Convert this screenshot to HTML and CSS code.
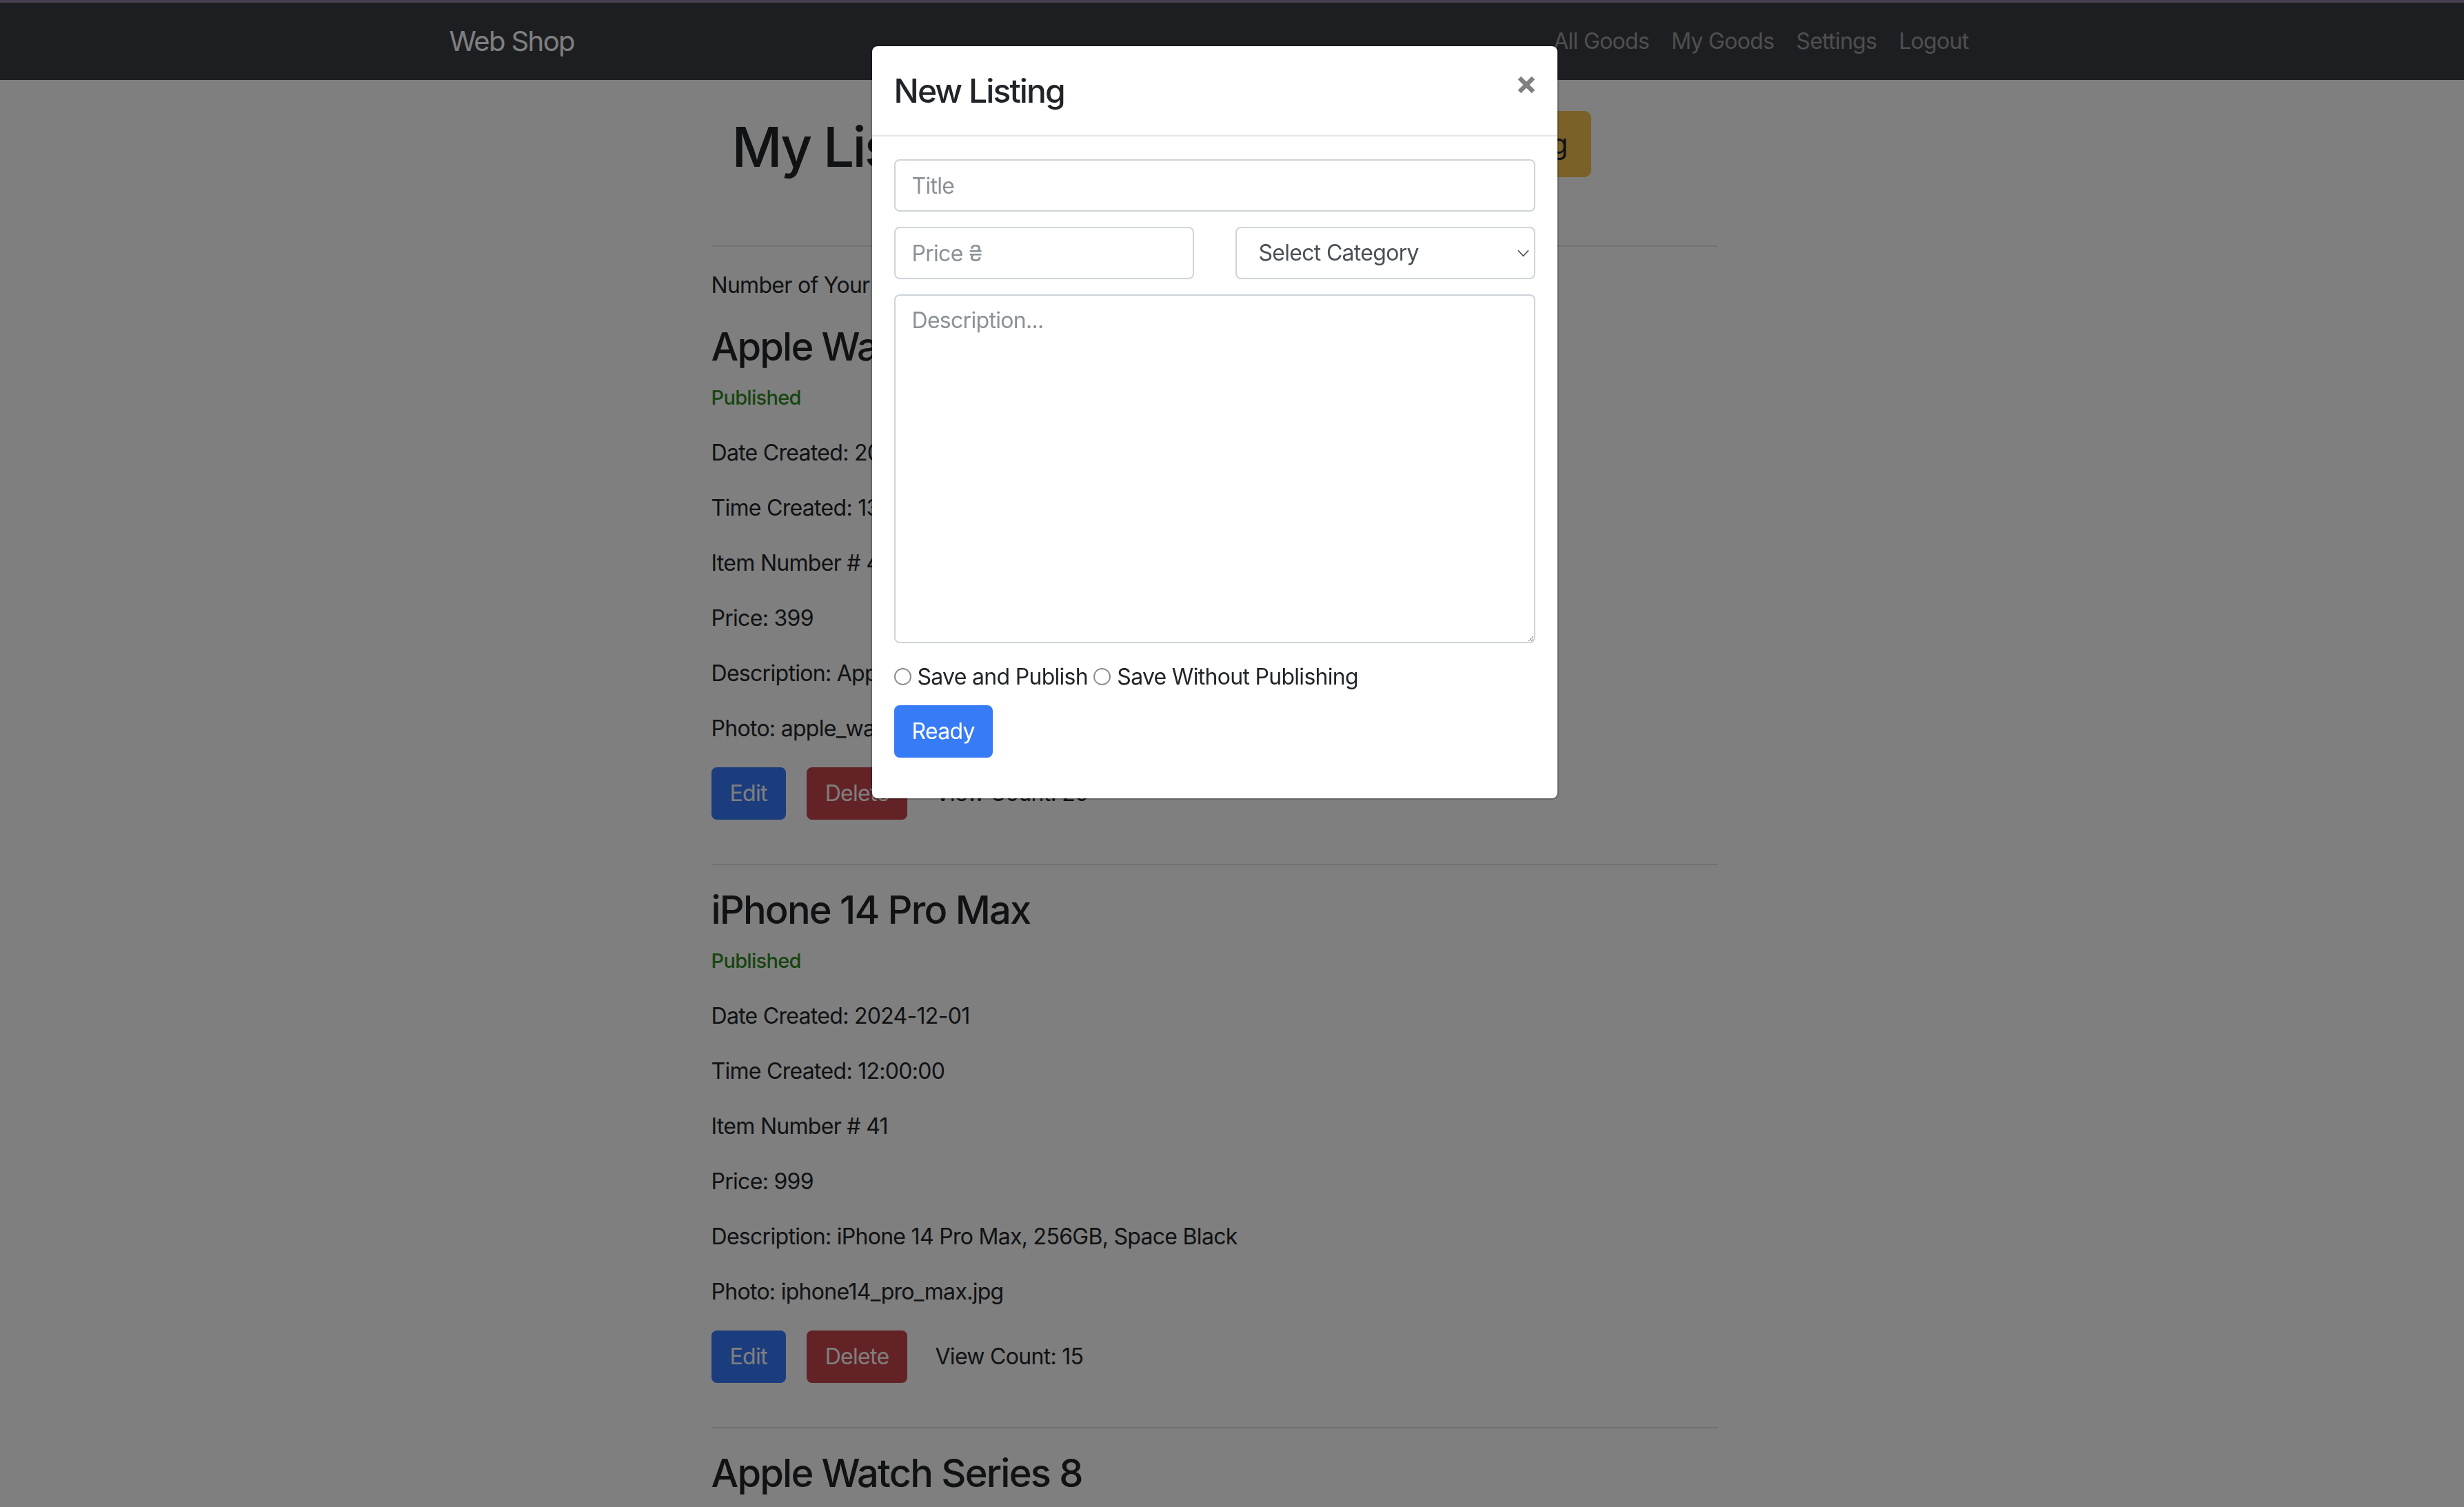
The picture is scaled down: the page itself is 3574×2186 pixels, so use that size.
FILE: index.html
```html
<!DOCTYPE html>
<html lang="en">
<head>
<meta charset="utf-8">
<title>Web Shop</title>
<link rel="stylesheet" href="styles.css">
</head>
<body class="modal-open">
<div class="top-edge"></div>
<nav class="navbar">
  <div class="nav-inner">
    <a class="brand" href="#">Web Shop</a>
    <ul class="nav-links">
      <li><a href="#">All Goods</a></li>
      <li><a href="#">My Goods</a></li>
      <li><a href="#">Settings</a></li>
      <li><a href="#">Logout</a></li>
    </ul>
  </div>
</nav>
<div class="page">
  <main class="content">
    <div class="head-row">
      <h1 class="page-title">My Listings</h1>
      <button class="btn btn-warning btn-lg" type="button">New Listing</button>
    </div>
    <hr class="divider">
    <p class="line">Number of Your Listings: 3</p>

    <section class="listing">
      <h3 class="listing-title">Apple Watch Ultra 2</h3>
      <p class="line status">Published</p>
      <p class="line">Date Created: 2024-12-02</p>
      <p class="line">Time Created: 13:30:00</p>
      <p class="line">Item Number # 42</p>
      <p class="line">Price: 399</p>
      <p class="line">Description: Apple Watch Ultra 2</p>
      <p class="line">Photo: apple_watch.jpg</p>
      <div class="actions">
        <button class="btn btn-edit" type="button">Edit</button>
        <button class="btn btn-delete" type="button">Delete</button>
        <span class="views">View Count: 20</span>
      </div>
    </section>
    <hr class="divider">

    <section class="listing">
      <h3 class="listing-title">iPhone 14 Pro Max</h3>
      <p class="line status">Published</p>
      <p class="line">Date Created: 2024-12-01</p>
      <p class="line">Time Created: 12:00:00</p>
      <p class="line">Item Number # 41</p>
      <p class="line">Price: 999</p>
      <p class="line">Description: iPhone 14 Pro Max, 256GB, Space Black</p>
      <p class="line">Photo: iphone14_pro_max.jpg</p>
      <div class="actions">
        <button class="btn btn-edit" type="button">Edit</button>
        <button class="btn btn-delete" type="button">Delete</button>
        <span class="views">View Count: 15</span>
      </div>
    </section>
    <hr class="divider">

    <section class="listing">
      <h3 class="listing-title">Apple Watch Series 8</h3>
      <p class="line status">Published</p>
      <p class="line">Date Created: 2024-11-30</p>
      <p class="line">Time Created: 10:00:00</p>
      <p class="line">Item Number # 40</p>
      <p class="line">Price: 349</p>
      <p class="line">Description: Apple Watch Series 8, 45mm</p>
      <p class="line">Photo: apple_watch_s8.jpg</p>
    </section>
  </main>
</div>

<div class="backdrop"></div>

<div class="modal-layer">
  <div class="modal" role="dialog" aria-labelledby="modalTitle">
    <div class="modal-header">
      <h4 class="modal-title" id="modalTitle">New Listing</h4>
      <button class="close" type="button" aria-label="Close">
        <svg class="close-icon" width="26" height="26" viewBox="0 0 26 26" aria-hidden="true">
          <line x1="3" y1="3" x2="23" y2="23"/>
          <line x1="23" y1="3" x2="3" y2="23"/>
        </svg>
      </button>
    </div>
    <form class="modal-body">
      <input class="form-control field" type="text" placeholder="Title">
      <div class="form-row field">
        <input class="form-control" type="text" placeholder="Price ₴">
        <div class="select-wrap">
          <select class="form-control select">
            <option>Select Category</option>
            <option>Electronics</option>
            <option>Clothing</option>
          </select>
          <svg class="chevron" width="17" height="11" viewBox="0 0 17 11" aria-hidden="true">
            <polyline points="1,1.2 8.5,9.4 16,1.2"/>
          </svg>
        </div>
      </div>
      <textarea class="form-control textarea field textarea-gap" placeholder="Description..."></textarea>
      <div class="radios">
        <input class="radio" type="radio" name="pub" id="pub1"><label for="pub1">Save and Publish</label> <input class="radio" type="radio" name="pub" id="pub2"><label for="pub2">Save Without Publishing</label>
      </div>
      <button class="btn btn-ready" type="button">Ready</button>
    </form>
  </div>
</div>
</body>
</html>
```

FILE: styles.css
```css
html, body {
  margin: 0;
  padding: 0;
}
body {
  font-family: "Inter", "Noto Sans", "DejaVu Sans", sans-serif;
  font-size: 32px;
  line-height: 48px;
  color: #212529;
  background: #ffffff;
  letter-spacing: -0.022em;
}
body.modal-open {
  overflow: hidden;
  height: 2186px;
}

/* top edge + navbar */
.top-edge {
  height: 4px;
  background: #8a809e;
}
.navbar {
  background: #3a3d42;
  padding-right: 51px;
}
.nav-inner {
  width: 2220px;
  height: 112px;
  margin: 0 auto;
  display: flex;
  align-items: center;
  justify-content: space-between;
}
.brand {
  font-size: 40px;
  line-height: 60px;
  letter-spacing: -0.04em;
  color: #ffffff;
  text-decoration: none;
}
.nav-links {
  display: flex;
  list-style: none;
  margin: 0;
  padding: 0;
}
.nav-links a {
  display: block;
  padding: 0 16px;
  font-size: 32px;
  line-height: 48px;
  color: rgba(255, 255, 255, 0.5);
  text-decoration: none;
}

/* page */
.page {
  padding-right: 51px;
}
.content {
  width: 1460px;
  margin: 0 auto;
}
.head-row {
  display: flex;
  align-items: flex-start;
  padding: 45px 0 63px;
}
.page-title {
  flex: 1;
  margin: 4px 0 0;
  padding-left: 30px;
  font-size: 80px;
  line-height: 96px;
  font-weight: 500;
  letter-spacing: -0.035em;
  white-space: nowrap;
}
.divider {
  margin: 32px 0;
  border: 0;
  border-top: 2px solid rgba(0, 0, 0, 0.1);
  height: 0;
}
.line {
  margin: 0 0 32px;
}
.listing {
  display: flow-root;
}
.listing-title {
  margin: 0 0 16px;
  font-size: 56px;
  line-height: 67px;
  font-weight: 500;
  letter-spacing: -0.032em;
}
.status {
  color: #2e8a1f;
  font-size: 29px;
  font-weight: 500;
}
.actions {
  display: flex;
  align-items: center;
  margin-bottom: 32px;
}
.views {
  margin-left: 40px;
}

/* buttons */
.btn {
  font-family: inherit;
  letter-spacing: inherit;
  font-size: 32px;
  line-height: 48px;
  padding: 12px 24px;
  border: 2px solid transparent;
  border-radius: 8px;
  color: #ffffff;
  cursor: pointer;
}
.btn-lg {
  font-size: 40px;
  line-height: 60px;
  padding: 16px 32px;
  border-radius: 10px;
}
.btn-warning {
  background: #f4c24f;
  color: #212529;
  margin-right: 184px;
}
.btn-edit {
  background: #387afa;
  margin-right: 30px;
  padding: 12px 25px;
}
.btn-delete {
  background: #c6444a;
  padding: 12px 25px;
}

/* backdrop + modal */
.backdrop {
  position: fixed;
  inset: 0;
  background: rgba(0, 0, 0, 0.5);
}
.modal-layer {
  position: fixed;
  inset: 0;
  padding: 65px 51px 0 0;
  display: flex;
  justify-content: center;
  align-items: flex-start;
}
.modal {
  width: 998px;
  box-sizing: border-box;
  background: #ffffff;
  border: 2px solid rgba(0, 0, 0, 0.2);
  border-radius: 10px;
  background-clip: padding-box;
}
.modal-header {
  display: flex;
  align-items: flex-start;
  padding: 32px 32px 31px;
  border-bottom: 2px solid #e4e6ea;
}
.modal-title {
  margin: 0;
  font-size: 48px;
  line-height: 66px;
  font-weight: 500;
  letter-spacing: -0.04em;
}
.close {
  margin: 11px 0 0 auto;
  padding: 0;
  border: 0;
  background: transparent;
  display: flex;
  cursor: pointer;
}
.close-icon line {
  stroke: #808080;
  stroke-width: 6.5;
}
.modal-body {
  display: block;
  padding: 33px 32px 59px;
}
.form-control {
  display: block;
  width: 100%;
  box-sizing: border-box;
  height: 76px;
  margin: 0;
  padding: 12px 24px;
  font-family: inherit;
  letter-spacing: inherit;
  font-size: 32px;
  line-height: 48px;
  color: #495057;
  background: #ffffff;
  border: 2px solid #ced4da;
  border-radius: 8px;
  outline: none;
}
.form-control::placeholder {
  color: #8b9197;
  opacity: 1;
}
.field {
  margin-bottom: 22px;
}
.form-row {
  display: grid;
  grid-template-columns: 1fr 1fr;
  column-gap: 60px;
}
.select-wrap {
  position: relative;
}
.select {
  appearance: none;
  -webkit-appearance: none;
  padding-left: 32px;
  padding-right: 40px;
}
.chevron {
  position: absolute;
  right: 9px;
  top: 33px;
  pointer-events: none;
}
.chevron polyline {
  fill: none;
  stroke: #4a4a4a;
  stroke-width: 1.6;
}
.textarea {
  height: 506px;
  resize: vertical;
}
.textarea-gap {
  margin-bottom: 25px;
}
.radios {
  margin-bottom: 17px;
  color: #212529;
}
.radio {
  appearance: none;
  -webkit-appearance: none;
  display: inline-block;
  width: 25px;
  height: 25px;
  box-sizing: border-box;
  margin: 0 9px 0 0;
  border: 2px solid #8e8e8e;
  border-radius: 50%;
  background: #ffffff;
  vertical-align: -1px;
}
.btn-ready {
  background: #377bf7;
}
```
